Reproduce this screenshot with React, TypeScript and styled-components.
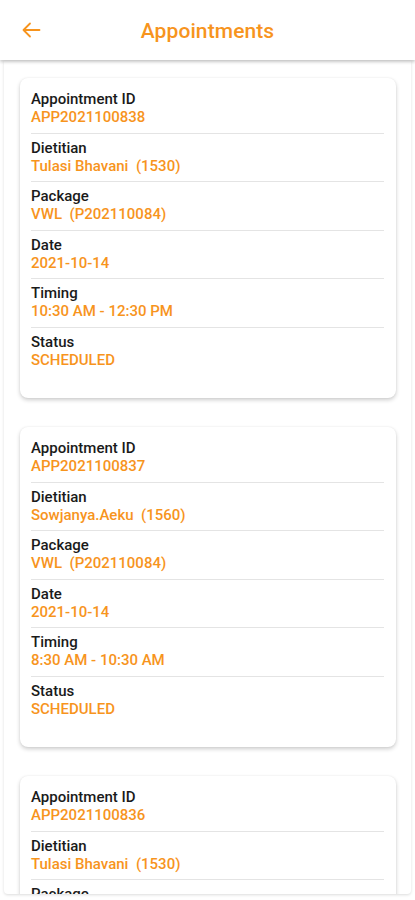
import React from "react";
import styled, { createGlobalStyle } from "styled-components";

const ORANGE = "#F7941D";

const GlobalStyle = createGlobalStyle`
  html, body {
    margin: 0;
    padding: 0;
    background: #ffffff;
    font-family: Roboto, "Noto Sans", Arial, sans-serif;
  }
  * { box-sizing: border-box; }
`;

const Page = styled.div`
  width: 415px;
  height: 900px;
  display: flex;
  flex-direction: column;
  background: #ffffff;
  overflow: hidden;
`;

const Header = styled.header`
  height: 60px;
  flex: 0 0 60px;
  display: grid;
  grid-template-columns: 1fr auto 1fr;
  align-items: center;
  background: #ffffff;
  box-shadow: 0 2px 3px rgba(0, 0, 0, 0.22);
  position: relative;
  z-index: 2;
`;

const BackButton = styled.button`
  justify-self: start;
  margin-left: 19px;
  width: 24px;
  height: 24px;
  padding: 0;
  border: none;
  background: transparent;
  display: flex;
  align-items: center;
  justify-content: center;
`;

const Title = styled.h1`
  margin: 0 0 -2px;
  font-size: 21px;
  font-weight: 500;
  color: ${ORANGE};
  letter-spacing: 0.1px;
`;

const Content = styled.main`
  margin: 1px 4px 0;
  height: 833px;
  overflow: hidden;
  padding: 17px 15px 0 16px;
  border-radius: 0 0 4px 4px;
  box-shadow: 0 1px 3px rgba(0, 0, 0, 0.14);
  display: flex;
  flex-direction: column;
  gap: 29px;
`;

const Card = styled.section`
  flex: 0 0 auto;
  background: #ffffff;
  border-radius: 8px;
  padding: 7px 12px 23px 11px;
  box-shadow: 0 2px 4px rgba(0, 0, 0, 0.2), 0 0 2px rgba(0, 0, 0, 0.06);
`;

const Row = styled.div<{ $last?: boolean }>`
  padding: 5px 0 6px;
  border-bottom: ${(p) => (p.$last ? "none" : "1px solid #e4e4e4")};
`;

const Label = styled.div`
  font-size: 15px;
  line-height: 18px;
  font-weight: 500;
  color: #1a1a1a;
`;

const Value = styled.div`
  font-size: 15px;
  line-height: 18.5px;
  font-weight: 500;
  color: ${ORANGE};
  white-space: pre;
`;

type Appointment = {
  id: string;
  dietitian: string;
  pkg: string;
  date: string;
  timing: string;
  status: string;
};

const appointments: Appointment[] = [
  {
    id: "APP2021100838",
    dietitian: "Tulasi Bhavani  (1530)",
    pkg: "VWL  (P202110084)",
    date: "2021-10-14",
    timing: "10:30 AM - 12:30 PM",
    status: "SCHEDULED",
  },
  {
    id: "APP2021100837",
    dietitian: "Sowjanya.Aeku  (1560)",
    pkg: "VWL  (P202110084)",
    date: "2021-10-14",
    timing: "8:30 AM - 10:30 AM",
    status: "SCHEDULED",
  },
  {
    id: "APP2021100836",
    dietitian: "Tulasi Bhavani  (1530)",
    pkg: "VWL  (P202110084)",
    date: "2021-10-14",
    timing: "10:30 AM - 12:30 PM",
    status: "SCHEDULED",
  },
];

const BackArrow = () => (
  <svg width="20" height="20" viewBox="0 0 20 20" fill="none">
    <path
      d="M18.5 10H2.5M2.5 10L9 3.5M2.5 10L9 16.5"
      stroke={ORANGE}
      strokeWidth="1.8"
      strokeLinecap="round"
      strokeLinejoin="round"
    />
  </svg>
);

const AppointmentCard = ({ a }: { a: Appointment }) => {
  const fields: [string, string][] = [
    ["Appointment ID", a.id],
    ["Dietitian", a.dietitian],
    ["Package", a.pkg],
    ["Date", a.date],
    ["Timing", a.timing],
    ["Status", a.status],
  ];
  return (
    <Card>
      {fields.map(([label, value], i) => (
        <Row key={label} $last={i === fields.length - 1}>
          <Label>{label}</Label>
          <Value>{value}</Value>
        </Row>
      ))}
    </Card>
  );
};

export default function App() {
  return (
    <>
      <GlobalStyle />
      <Page>
        <Header>
          <BackButton aria-label="Back">
            <BackArrow />
          </BackButton>
          <Title>Appointments</Title>
          <span />
        </Header>
        <Content>
          {appointments.map((a) => (
            <AppointmentCard key={a.id} a={a} />
          ))}
        </Content>
      </Page>
    </>
  );
}
